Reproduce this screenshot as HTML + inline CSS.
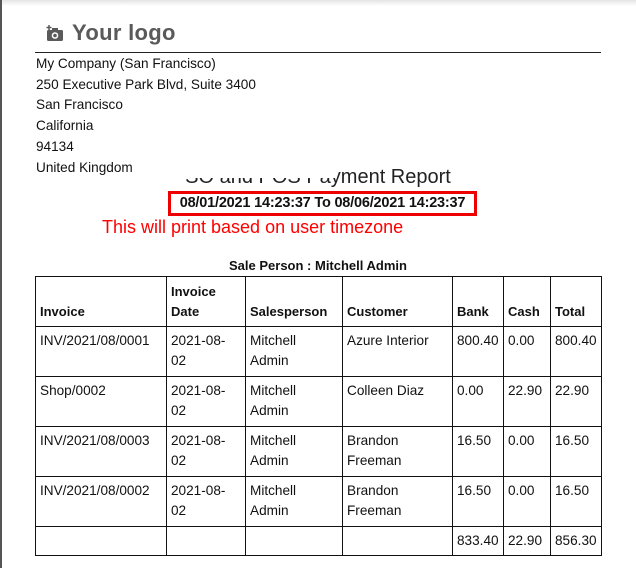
<!DOCTYPE html>
<html><head><style>
body{margin:0;width:636px;height:568px;background:#fff;position:relative;overflow:hidden;font-family:"Liberation Sans",sans-serif;color:#111;}
.lb{position:absolute;left:0;top:0;width:2px;height:568px;background:#555;}
.tp{position:absolute;left:0;top:0;width:636px;height:6px;background:linear-gradient(#e4e4e4,#fff);}
.logo{position:absolute;left:72px;top:20px;font-size:22px;font-weight:bold;color:#5a5a5a;letter-spacing:0.3px;}
.hr{position:absolute;left:35px;top:52px;width:566px;height:1px;background:#222;}
.addr{position:absolute;left:36px;top:54px;font-size:13.6px;line-height:20.7px;background:#fff;z-index:2;width:300px;}
.title{position:absolute;left:0;width:636px;top:166px;text-align:center;font-size:20px;z-index:1;color:#222;}
.box{position:absolute;left:168px;top:191px;width:303px;height:19px;border:3px solid #e00;font-size:14.5px;font-weight:bold;text-align:center;line-height:19px;letter-spacing:-0.2px;}
.red{position:absolute;left:102px;top:217px;font-size:18px;color:#f00;}
.sp{position:absolute;left:0;width:636px;top:258px;text-align:center;font-size:13px;font-weight:bold;}
table{position:absolute;left:35px;top:276px;border-collapse:collapse;font-size:13.6px;}
td,th{border:1px solid #111;padding:4px 4px;vertical-align:top;text-align:left;line-height:20px;height:41px;}
th{vertical-align:bottom;height:41px;font-size:13px;}
tr.t td{height:20px;}
</style></head><body>
<div class="tp"></div><div class="lb"></div>
<svg style="position:absolute;left:46px;top:25px" width="18" height="17" viewBox="0 0 18 17"><rect x="1" y="5" width="16" height="11" rx="1.5" fill="#5a5a5a"/><rect x="6" y="3" width="6" height="3" fill="#5a5a5a"/><circle cx="9" cy="10.5" r="3.3" fill="#fff"/><circle cx="9" cy="10.5" r="1.8" fill="#5a5a5a"/><path d="M3 0v5M0.5 2.5h5" stroke="#5a5a5a" stroke-width="1.5"/></svg>
<div class="logo">Your logo</div>
<div class="hr"></div>
<div class="addr">My Company (San Francisco)<br>250 Executive Park Blvd, Suite 3400<br>San Francisco<br>California<br>94134<br>United Kingdom</div>
<div class="title">SO and POS Payment Report</div>
<div class="box">08/01/2021 14:23:37 To 08/06/2021 14:23:37</div>
<div class="red">This will print based on user timezone</div>
<div class="sp">Sale Person : Mitchell Admin</div>
<table>
<colgroup><col style="width:131px"><col style="width:79px"><col style="width:97px"><col style="width:110px"><col style="width:51px"><col style="width:47px"><col style="width:51px"></colgroup>
<tr><th>Invoice</th><th>Invoice<br>Date</th><th>Salesperson</th><th>Customer</th><th>Bank</th><th>Cash</th><th>Total</th></tr>
<tr><td>INV/2021/08/0001</td><td>2021-08-<br>02</td><td>Mitchell<br>Admin</td><td>Azure Interior</td><td>800.40</td><td>0.00</td><td>800.40</td></tr>
<tr><td>Shop/0002</td><td>2021-08-<br>02</td><td>Mitchell<br>Admin</td><td>Colleen Diaz</td><td>0.00</td><td>22.90</td><td>22.90</td></tr>
<tr><td>INV/2021/08/0003</td><td>2021-08-<br>02</td><td>Mitchell<br>Admin</td><td>Brandon<br>Freeman</td><td>16.50</td><td>0.00</td><td>16.50</td></tr>
<tr><td>INV/2021/08/0002</td><td>2021-08-<br>02</td><td>Mitchell<br>Admin</td><td>Brandon<br>Freeman</td><td>16.50</td><td>0.00</td><td>16.50</td></tr>
<tr class="t"><td></td><td></td><td></td><td></td><td>833.40</td><td>22.90</td><td>856.30</td></tr>
</table>
</body></html>
